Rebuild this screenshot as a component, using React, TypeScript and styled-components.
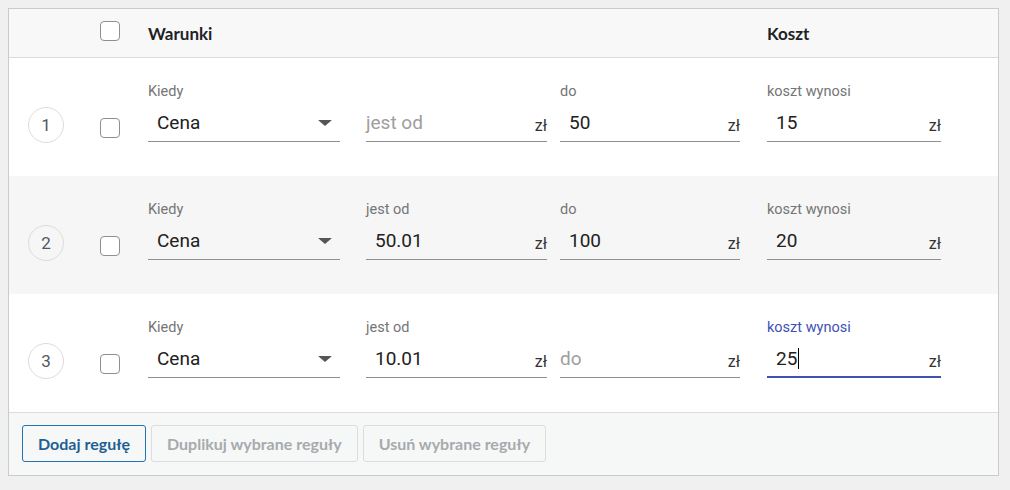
import React from 'react';
import styled, { createGlobalStyle } from 'styled-components';

type Rule = {
    from: string;
    to: string;
    cost: string;
    focused?: boolean;
};

const rules: Rule[] = [
    { from: '', to: '50', cost: '15' },
    { from: '50.01', to: '100', cost: '20' },
    { from: '10.01', to: '', cost: '25', focused: true },
];

const GlobalStyle = createGlobalStyle`
  body {
    margin: 8px 11px 14px 8px;
    background: #f0f0f1;
    font-family: Lato, "Liberation Sans", sans-serif;
  }
`;

const Table = styled.div`
  border: 1px solid #c9cbce;
  background: #fff;
`;

const HeaderRow = styled.div`
  display: flex;
  align-items: center;
  height: 48px;
  background: #f8f8f8;
  border-bottom: 1px solid #dcdcde;
`;

const NumberCell = styled.div`
  width: 72px;
  padding-left: 19px;
  flex-shrink: 0;
`;

const CheckCell = styled.div`
  width: 48px;
  flex-shrink: 0;
`;

const HeadTitle = styled.div<{ $width?: number }>`
  width: ${p => (p.$width ? `${p.$width}px` : 'auto')};
  flex-shrink: 0;
  font-size: 17px;
  font-weight: 700;
  color: #1d2327;
`;

const RuleRow = styled.div<{ $striped: boolean }>`
  display: flex;
  align-items: flex-start;
  height: 118px;
  box-sizing: border-box;
  padding-top: 26px;
  background: ${p => (p.$striped ? '#f6f6f6' : '#fff')};
`;

const Circle = styled.div`
  width: 36px;
  height: 36px;
  margin-top: 23px;
  box-sizing: border-box;
  border: 1px solid #dcdcde;
  border-radius: 50%;
  display: flex;
  align-items: center;
  justify-content: center;
  font-family: Roboto, "Liberation Sans", sans-serif;
  font-size: 17px;
  color: #50575e;
`;

const Checkbox = styled.div<{ $top?: number; $bottom?: number }>`
  width: 20px;
  height: 20px;
  margin-top: ${p => p.$top ?? 0}px;
  margin-bottom: ${p => p.$bottom ?? 0}px;
  box-sizing: border-box;
  border: 1px solid #8c8f94;
  border-radius: 4px;
  background: #fff;
`;

const Field = styled.div<{ $width: number; $gap: number }>`
  width: ${p => p.$width}px;
  margin-right: ${p => p.$gap}px;
  flex-shrink: 0;
  font-family: Roboto, "Liberation Sans", sans-serif;
`;

const Label = styled.div<{ $focused?: boolean; $hidden?: boolean }>`
  height: 16px;
  line-height: 16px;
  font-size: 14.5px;
  color: ${p => (p.$focused ? '#3f51b5' : '#757575')};
  visibility: ${p => (p.$hidden ? 'hidden' : 'visible')};
`;

const InputLine = styled.div<{ $focused?: boolean }>`
  display: flex;
  align-items: center;
  height: 42px;
  box-sizing: border-box;
  padding-top: 4px;
  border-bottom: 1px solid ${p => (p.$focused ? '#3f51b5' : '#8f8f8f')};
  box-shadow: ${p => (p.$focused ? 'inset 0 -1px 0 #3f51b5' : 'none')};
`;

const Value = styled.div`
  flex: 1;
  padding-left: 9px;
  font-size: 19px;
  color: #212121;
  display: flex;
  align-items: center;
`;

const Placeholder = styled.div`
  flex: 1;
  font-size: 19px;
  color: #9e9e9e;
`;

const Caret = styled.span`
  display: inline-block;
  width: 0;
  height: 21px;
  margin-left: 1px;
  border-left: 1px solid #000;
`;

const Suffix = styled.div`
  padding-top: 6px;
  font-size: 16px;
  color: #333;
`;

const Triangle = styled.div`
  width: 0;
  height: 0;
  margin-right: 8px;
  border-left: 7px solid transparent;
  border-right: 7px solid transparent;
  border-top: 6px solid #555;
  border-radius: 1px;
`;

const Footer = styled.div`
  display: flex;
  gap: 5px;
  height: 63px;
  box-sizing: border-box;
  padding: 12px 13px;
  background: #f6f7f7;
  border-top: 1px solid #dcdcde;
`;

const Button = styled.button<{ $disabled?: boolean }>`
  height: 37px;
  padding: 0 15px;
  border: 1px solid ${p => (p.$disabled ? '#dcdcde' : '#2271b1')};
  border-radius: 3px;
  background: #f6f7f7;
  font-family: Lato, "Liberation Sans", sans-serif;
  font-size: 16px;
  font-weight: 700;
  color: ${p => (p.$disabled ? '#a7aaad' : '#1f5f93')};
  cursor: ${p => (p.$disabled ? 'default' : 'pointer')};
`;

type InputProps = {
    label: string;
    value: string;
    width: number;
    gap: number;
    focused?: boolean;
    select?: boolean;
};

const TextInput: React.FC<InputProps> = ({ label, value, width, gap, focused, select }) => {
    const empty = value === '';
    return (
        <Field $width={width} $gap={gap}>
            <Label $focused={focused} $hidden={empty}>{label}</Label>
            <InputLine $focused={focused}>
                {empty ? (
                    <Placeholder>{label}</Placeholder>
                ) : (
                    <Value>
                        {value}
                        {focused && <Caret />}
                    </Value>
                )}
                {select ? <Triangle /> : <Suffix>zł</Suffix>}
            </InputLine>
        </Field>
    );
};

const App: React.FC = () => {
    return (
        <>
            <GlobalStyle />
            <Table>
                <HeaderRow>
                    <NumberCell />
                    <CheckCell>
                        <Checkbox $bottom={4} />
                    </CheckCell>
                    <HeadTitle $width={619}>Warunki</HeadTitle>
                    <HeadTitle>Koszt</HeadTitle>
                </HeaderRow>

                {rules.map((rule, index) => (
                    <RuleRow key={index} $striped={index % 2 === 1}>
                        <NumberCell>
                            <Circle>{index + 1}</Circle>
                        </NumberCell>
                        <CheckCell>
                            <Checkbox $top={34} />
                        </CheckCell>
                        <TextInput label="Kiedy" value="Cena" width={192} gap={26} select />
                        <TextInput label="jest od" value={rule.from} width={181} gap={13} />
                        <TextInput label="do" value={rule.to} width={180} gap={27} />
                        <TextInput
                            label="koszt wynosi"
                            value={rule.cost}
                            width={174}
                            gap={0}
                            focused={rule.focused}
                        />
                    </RuleRow>
                ))}

                <Footer>
                    <Button>Dodaj regułę</Button>
                    <Button $disabled>Duplikuj wybrane reguły</Button>
                    <Button $disabled>Usuń wybrane reguły</Button>
                </Footer>
            </Table>
        </>
    );
};

export default App;
